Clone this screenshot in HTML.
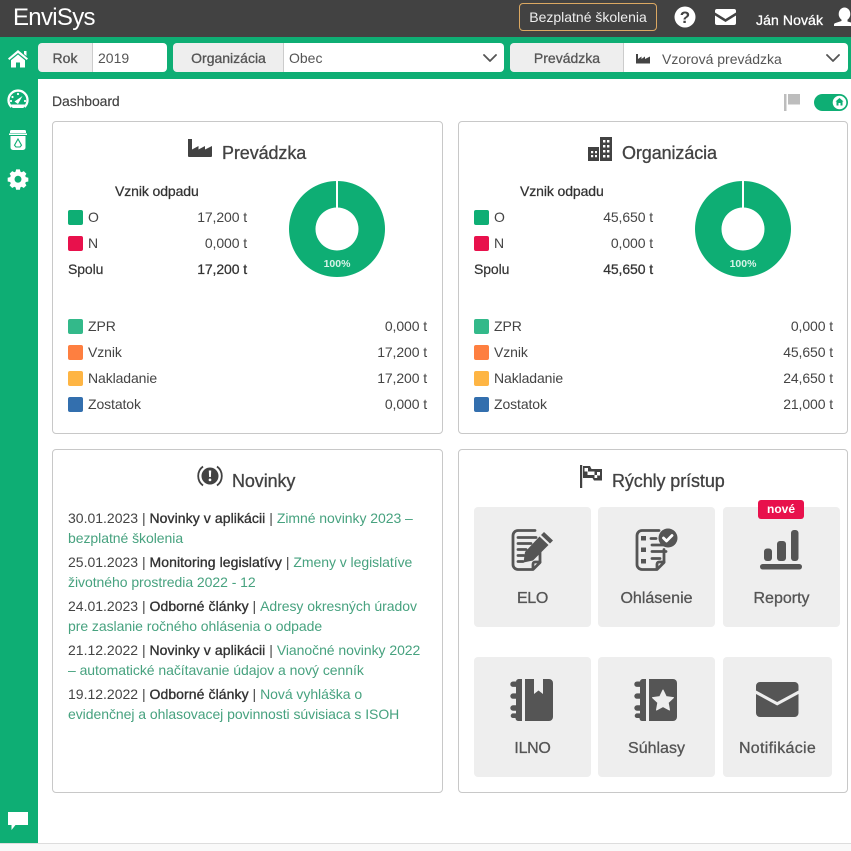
<!DOCTYPE html>
<html lang="sk"><head><meta charset="utf-8"><title>EnviSys</title>
<style>
html,body{margin:0;padding:0;background:#fff}
body{width:851px;height:851px;position:relative;overflow:hidden;font-family:"Liberation Sans",sans-serif;font-size:14px;color:#444}
.b{position:absolute;box-sizing:border-box}
.t{position:absolute;white-space:nowrap;line-height:20px;height:20px;letter-spacing:-.1px}
.r{text-align:right}
.m{-webkit-text-stroke:.3px currentColor}
.card{position:absolute;box-sizing:border-box;border:1px solid #c8c8c8;border-radius:4px;background:#fff}
.lab{position:absolute;top:43px;height:29px;background:#eee;border-radius:4px 0 0 4px;border-right:1px solid #ccc;box-sizing:border-box;text-align:center;line-height:30px;color:#555;-webkit-text-stroke:.3px #555}
.inp{position:absolute;top:43px;height:29px;background:#fff;border-radius:0 4px 4px 0;box-sizing:border-box;line-height:30px;color:#555;padding-left:5px}
.sq{position:absolute;width:15px;height:15px;border-radius:2px}
.h{font-size:18px;color:#424242;-webkit-text-stroke:.3px #424242;line-height:24px;height:24px}
.tile{position:absolute;width:117px;height:120px;background:#eee;border-radius:4px}
.tl{position:absolute;white-space:nowrap;text-align:center;font-size:16px;letter-spacing:0;color:#555;line-height:20px;-webkit-text-stroke:.3px #555}
a{color:#47a27f;text-decoration:none;letter-spacing:-.05px}
.n{left:68px;color:#444;letter-spacing:0}
.n b{font-weight:normal;color:#333;letter-spacing:.08px;-webkit-text-stroke:.35px #333}
</style></head><body>
<div class="b" style="left:0;top:0;width:851px;height:37px;background:#424242"></div>
<div class="b" style="left:0;top:37px;width:851px;height:42px;background:#0eae74"></div>
<div class="b" style="left:0;top:37px;width:38px;height:806px;background:#0eae74"></div>
<div class="b" style="left:0;top:843px;width:851px;height:8px;background:#f9f9f9;border-top:1px solid #ddd"></div>

<div class="t" style="left:13px;top:3px;font-size:24px;line-height:30px;height:30px;color:#fff;letter-spacing:-.7px">EnviSys</div>
<div class="b" style="left:519px;top:3px;width:138px;height:28px;border:1px solid #dba862;border-radius:4px;color:#eee;text-align:center;line-height:26px">Bezplatné školenia</div>
<div class="t m" style="left:756px;top:10px;color:#fff;letter-spacing:.1px">Ján Novák</div>

<div class="lab" style="left:38px;width:55px">Rok</div><div class="inp" style="left:93px;width:74px">2019</div>
<div class="lab" style="left:174px;width:110px;box-shadow:-1px 0 0 #eee">Organizácia</div><div class="inp" style="left:284px;width:220px">Obec</div>
<div class="lab" style="left:511px;width:113px;box-shadow:-1px 0 0 #eee">Prevádzka</div><div class="inp" style="left:624px;width:224px;padding-left:38px;padding-top:1px">Vzorová prevádzka</div>

<div class="t m" style="left:52px;top:91px;color:#424242;-webkit-text-stroke:.15px #424242">Dashboard</div>

<div class="card" style="left:52px;top:121px;width:391px;height:313px"></div>
<div class="card" style="left:458px;top:121px;width:390px;height:313px"></div>
<div class="card" style="left:52px;top:449px;width:391px;height:344px"></div>
<div class="card" style="left:458px;top:449px;width:390px;height:344px"></div>

<div class="t h" style="left:222px;top:141px">Prevádzka</div>
<div class="t h" style="left:622px;top:141px">Organizácia</div>
<div class="t h" style="left:232px;top:469px">Novinky</div>
<div class="t h" style="left:612px;top:469px">Rýchly prístup</div>

<!-- Prevadzka -->
<div class="t m" style="left:115px;top:181px;color:#333;-webkit-text-stroke:.25px #333">Vznik odpadu</div>
<div class="sq" style="left:68px;top:210px;background:#0eae74"></div><div class="t" style="left:88px;top:207px">O</div><div class="t r" style="right:604px;top:207px">17,200 t</div>
<div class="sq" style="left:68px;top:236px;background:#e8114c"></div><div class="t" style="left:88px;top:233px">N</div><div class="t r" style="right:604px;top:233px">0,000 t</div>
<div class="t m" style="left:68px;top:259px;color:#333;-webkit-text-stroke:.2px #333">Spolu</div><div class="t r m" style="right:604px;top:259px;color:#333;-webkit-text-stroke:.25px #333">17,200 t</div>
<div class="sq" style="left:68px;top:319px;background:#33b98a"></div><div class="t" style="left:88px;top:316px">ZPR</div><div class="t r" style="right:424px;top:316px">0,000 t</div>
<div class="sq" style="left:68px;top:345px;background:#fe7f40"></div><div class="t" style="left:88px;top:342px">Vznik</div><div class="t r" style="right:424px;top:342px">17,200 t</div>
<div class="sq" style="left:68px;top:371px;background:#feb544"></div><div class="t" style="left:88px;top:368px">Nakladanie</div><div class="t r" style="right:424px;top:368px">17,200 t</div>
<div class="sq" style="left:68px;top:397px;background:#336fae"></div><div class="t" style="left:88px;top:394px">Zostatok</div><div class="t r" style="right:424px;top:394px">0,000 t</div>

<!-- Organizacia -->
<div class="t m" style="left:520px;top:181px;color:#333;-webkit-text-stroke:.25px #333">Vznik odpadu</div>
<div class="sq" style="left:474px;top:210px;background:#0eae74"></div><div class="t" style="left:494px;top:207px">O</div><div class="t r" style="right:198px;top:207px">45,650 t</div>
<div class="sq" style="left:474px;top:236px;background:#e8114c"></div><div class="t" style="left:494px;top:233px">N</div><div class="t r" style="right:198px;top:233px">0,000 t</div>
<div class="t m" style="left:474px;top:259px;color:#333;-webkit-text-stroke:.2px #333">Spolu</div><div class="t r m" style="right:198px;top:259px;color:#333;-webkit-text-stroke:.25px #333">45,650 t</div>
<div class="sq" style="left:474px;top:319px;background:#33b98a"></div><div class="t" style="left:494px;top:316px">ZPR</div><div class="t r" style="right:18px;top:316px">0,000 t</div>
<div class="sq" style="left:474px;top:345px;background:#fe7f40"></div><div class="t" style="left:494px;top:342px">Vznik</div><div class="t r" style="right:18px;top:342px">45,650 t</div>
<div class="sq" style="left:474px;top:371px;background:#feb544"></div><div class="t" style="left:494px;top:368px">Nakladanie</div><div class="t r" style="right:18px;top:368px">24,650 t</div>
<div class="sq" style="left:474px;top:397px;background:#336fae"></div><div class="t" style="left:494px;top:394px">Zostatok</div><div class="t r" style="right:18px;top:394px">21,000 t</div>

<!-- Novinky -->
<div class="t n" style="top:508px">30.01.2023 | <b>Novinky v aplikácii</b> | <a>Zimné novinky 2023 –</a></div>
<div class="t n" style="top:528px"><a>bezplatné školenia</a></div>
<div class="t n" style="top:552px">25.01.2023 | <b>Monitoring legislatívy</b> | <a>Zmeny v legislatíve</a></div>
<div class="t n" style="top:572px"><a>životného prostredia 2022 - 12</a></div>
<div class="t n" style="top:596px">24.01.2023 | <b>Odborné články</b> | <a>Adresy okresných úradov</a></div>
<div class="t n" style="top:616px"><a>pre zaslanie ročného ohlásenia o odpade</a></div>
<div class="t n" style="top:640px">21.12.2022 | <b>Novinky v aplikácii</b> | <a>Vianočné novinky 2022</a></div>
<div class="t n" style="top:660px"><a>– automatické načítavanie údajov a nový cenník</a></div>
<div class="t n" style="top:684px">19.12.2022 | <b>Odborné články</b> | <a>Nová vyhláška o</a></div>
<div class="t n" style="top:704px"><a>evidenčnej a ohlasovacej povinnosti súvisiaca s ISOH</a></div>

<!-- Tiles -->
<div class="tile" style="left:474px;top:507px"></div>
<div class="tile" style="left:598px;top:507px"></div>
<div class="tile" style="left:723px;top:507px"></div>
<div class="tile" style="left:474px;top:657px"></div>
<div class="tile" style="left:598px;top:657px"></div>
<div class="tile" style="left:723px;top:657px;width:109px"></div>
<div class="tl" style="left:474px;top:589px;width:117px;letter-spacing:-.3px">ELO</div>
<div class="tl" style="left:598px;top:589px;width:117px">Ohlásenie</div>
<div class="tl" style="left:723px;top:589px;width:117px">Reporty</div>
<div class="tl" style="left:474px;top:739px;width:117px;letter-spacing:-.3px">ILNO</div>
<div class="tl" style="left:598px;top:739px;width:117px">Súhlasy</div>
<div class="tl" style="left:723px;top:739px;width:109px;letter-spacing:.3px">Notifikácie</div>
<div class="b" style="left:758px;top:500px;width:46px;height:19px;background:#e8114c;border-radius:3px;color:#fff;font-size:12px;font-weight:bold;text-align:center;line-height:18px">nové</div>

<svg style="position:absolute;left:0;top:0" width="851" height="851" viewBox="0 0 851 851">
<!-- donuts -->
<g fill="#0eae74">
<path fill-rule="evenodd" d="M337 181a48 48 0 1 0 .01 0zM337 207.500a21.500 21.500 0 1 1-.01 0z"/>
<path fill-rule="evenodd" d="M743 181a48 48 0 1 0 .01 0zM743 207.500a21.500 21.500 0 1 1-.01 0z"/>
</g>
<path d="M337 180v29M743 180v29" stroke="#fff" stroke-width="2"/>
<g font-family="Liberation Sans" font-size="10.500" font-weight="bold" fill="#d8f3e8" text-anchor="middle">
<text x="337" y="267">100%</text><text x="743" y="267">100%</text></g>

<!-- top bar icons -->
<circle cx="685" cy="17" r="10.500" fill="#fff"/>
<text x="685" y="23" font-family="Liberation Sans" font-size="17" font-weight="bold" fill="#424242" text-anchor="middle">?</text>
<path fill="#fff" d="M717 9h17a2 2 0 0 1 2 2v1.500l-10.500 6.500L715 12.500V11a2 2 0 0 1 2-2zM715 15.500l10.500 6.500 10.500-6.500V23a2 2 0 0 1-2 2h-17a2 2 0 0 1-2-2z"/>
<ellipse cx="844.500" cy="14" rx="5.800" ry="6.500" fill="#fff"/>
<path fill="#fff" d="M841.500 19h6v2.500l5 1.500c.5.2 1 .6 1 1v2h-19.500v-1.500c0-.7.5-1.200 1.500-1.500l6-2z"/>

<!-- chevrons -->
<path d="M484 55l6 6 6-6M827 55l6 6 6-6" fill="none" stroke="#555" stroke-width="1.800" stroke-linecap="round" stroke-linejoin="round"/>
<!-- select factory -->
<path fill="#444" d="M636 54h2v5l3.500-2.500v2.500l3.500-2.500v2.500l5-2.500v7h-14z"/>

<!-- sidebar -->
<g fill="#fff">
<path d="M18 50l10 8.500-1.300 1.500L18 53l-8.700 7L8 58.500zM24 51h2.500v5L24 54z"/>
<path d="M18 54.500l7 5.800V67.500h-5v-5h-4v5h-5v-7.200z"/>
<path d="M11.500 107a9.500 9.500 0 1 1 13 0" fill="none" stroke="#fff" stroke-width="2.300"/>
<path d="M11 104.500h14l-1.500 3.500H12.500z"/>
<path d="M14.500 101.500l8-5.500-4.500 8z"/><circle cx="12.500" cy="97" r="1.100"/><circle cx="18" cy="94" r="1.100"/><circle cx="11" cy="101" r="1.100"/><circle cx="25" cy="101" r="1.100"/>
<path d="M10 131.500a1.500 1.500 0 0 1 1.500-1.500h13a1.500 1.500 0 0 1 1.500 1.500V133H10zM9 133.500h18V135H9zM10.500 136h15v11.500a2.500 2.500 0 0 1-2.500 2.500H13a2.500 2.500 0 0 1-2.500-2.500z"/>
<path d="M18 139l3.500 6.200-1.500 1.800h-4l-1.500-1.800z" stroke="#0eae74" stroke-width="1.100" fill="none"/>
<path transform="translate(18 179.500) scale(.86) translate(-18 -180.800)" fill-rule="evenodd" d="M15.800 169h4.400l.6 2.700 1.500.7 2.400-1.400 3.100 3.100-1.400 2.400.7 1.500 2.900.7v4.400l-2.900.6-.7 1.500 1.400 2.400-3.100 3.100-2.400-1.400-1.500.7-.6 2.700h-4.400l-.6-2.700-1.500-.7-2.400 1.400-3.100-3.100 1.400-2.400-.7-1.500-2.900-.6v-4.400l2.900-.7.7-1.500-1.400-2.400 3.100-3.100 2.400 1.400 1.500-.7zM18 176.500a4 4 0 1 0 .01 0z"/>
<path d="M8 812h20v13H15.500l-4 5v-5H8z"/>
</g>

<!-- flag + toggle -->
<path fill="#bdbdbd" d="M784 94h2.500v17H784zM788 94h12v10.500h-12z"/>
<rect x="814" y="94" width="34" height="17" rx="8.500" fill="#0eae74"/>
<circle cx="839.500" cy="102.500" r="6.800" fill="#fff"/>
<path fill="#0eae74" d="M839.500 98l4 3.500h-1v4h-2v-2.500h-2v2.500h-2v-4h-1z"/>

<!-- card icons -->
<g fill="#424242">
<path d="M188 139h4v10.500l6.500-3.500v3.500l6.500-3.500v3.500l7-3.500v10a1 1 0 0 1-1 1h-22a1 1 0 0 1-1-1z"/>
<path fill-rule="evenodd" d="M600 137h12v24h-12zM603 140v2.500h2.400V140zM607 140v2.500h2.400V140zM603 145v2.500h2.400V145zM607 145v2.500h2.400V145zM603 150v2.500h2.400V150zM607 150v2.500h2.400V150zM603 155v2.500h2.400V155zM607 155v2.500h2.400V155z"/>
<path fill-rule="evenodd" d="M588 147h11v14h-11zM591 151v2.300h2.200V151zM595 151v2.300h2V151zM591 155v2.300h2.200V155zM595 155v2.300h2V155z"/>
<path fill-rule="evenodd" d="M210 467.500a8.500 8.500 0 1 0 .01 0zM208.800 470.500h2.400l-.3 6.500h-1.800zM210 478.500a1.400 1.400 0 1 1-.01 0z"/>
<path d="M203 485.500a11.800 11.800 0 0 1 0-19M217 466.500a11.800 11.800 0 0 1 0 19" fill="none" stroke="#424242" stroke-width="1.800"/>
<path d="M580 465h2.200v23H580z"/>
<path fill-rule="evenodd" d="M583 466h7l1.500 3H602v11.500h-8l-1.500-2.500H583zM584.500 468v3.500h3.500V468zM591 471.500v3.500h3.500v-3.500zM597 472v3.500h3V472zM587.500 471.500v3.500H591v-3.500zM594.500 475v3h2.700v-3z"/>
</g>

<!-- tile icons -->
<g fill="none" stroke="#555" stroke-width="2.800" stroke-linecap="round" stroke-linejoin="round">
<path d="M535 530.500h-17a5 5 0 0 0-5 5v29a5 5 0 0 0 5 5h15l7-7v-10"/>
<path d="M533 569v-5a2 2 0 0 1 2-2h5"/>
<path d="M518 537.500h18M518 543.500h13M518 549.500h8M518 555.500h6M518 561.500h5"/>
<path d="M659 530.500h-17a5 5 0 0 0-5 5v29a5 5 0 0 0 5 5h15l7-7v-13"/>
<path d="M657 569v-5a2 2 0 0 1 2-2h5"/>
<path d="M651 538.500h5M652 545h12M652 551.500h14M652 558.500h8"/>
</g>
<g fill="#555">
<path d="M544 532l9 8.500-3 3-9-8.500zM539.500 536.500l9 8.500-15.500 15.500-9.500 2 1.500-10.500z"/>
<path d="M641 536h5v4.500h-5zM641 547.500h5v4.500h-5zM641 559h5v4.500h-5z"/>
<circle cx="668" cy="538" r="9.500"/>
<rect x="764" y="548.500" width="8" height="12.500" rx="3"/>
<rect x="777" y="541" width="9" height="20" rx="3"/>
<rect x="791" y="530" width="7.500" height="31" rx="3"/>
<rect x="760" y="564" width="42" height="5.500" rx="2.700"/>
<path d="M518 679h4v42h-4a3 3 0 0 1-2.500-3h-2.500a2.300 2.300 0 0 1 0-4.600h3v-2.700h-3a2.700 2.700 0 0 1 0-5.400h3v-6.500h-3a2.700 2.700 0 0 1 0-5.400h3v-6.500h-3a2.700 2.700 0 0 1 0-5.400h3V682a3 3 0 0 1 2.500-3z"/>
<path d="M525 679h9v15l4.500-3.500 4.500 3.500v-15h6a4 4 0 0 1 4 4v34a4 4 0 0 1-4 4h-24z"/>
<path d="M543 679h4v42h-4a3 3 0 0 1-2.500-3h-2.500a2.300 2.300 0 0 1 0-4.600h3v-2.700h-3a2.700 2.700 0 0 1 0-5.400h3v-6.500h-3a2.700 2.700 0 0 1 0-5.400h3v-6.500h-3a2.700 2.700 0 0 1 0-5.400h3V682a3 3 0 0 1 2.500-3z" transform="translate(99 0)"/>
<path d="M649 679h24a4 4 0 0 1 4 4v34a4 4 0 0 1-4 4h-24z"/>
<path d="M760 682h34.500a4 4 0 0 1 4 4v4.500l-21.300 11.500L756 690.500V686a4 4 0 0 1 4-4zM756 694l21.200 11.500L798.500 694v19a4 4 0 0 1-4 4H760a4 4 0 0 1-4-4z"/>
</g>
<path d="M663.500 538l3 3 5.500-5.500" fill="none" stroke="#fff" stroke-width="2.800" stroke-linecap="round" stroke-linejoin="round"/>
<path d="M663 690l3.200 6.600 7.300 1-5.300 5.100 1.300 7.300-6.500-3.500-6.500 3.500 1.300-7.300-5.300-5.100 7.300-1z" fill="#eee" stroke="#eee" stroke-width="1" stroke-linejoin="round"/>
</svg>
</body></html>
